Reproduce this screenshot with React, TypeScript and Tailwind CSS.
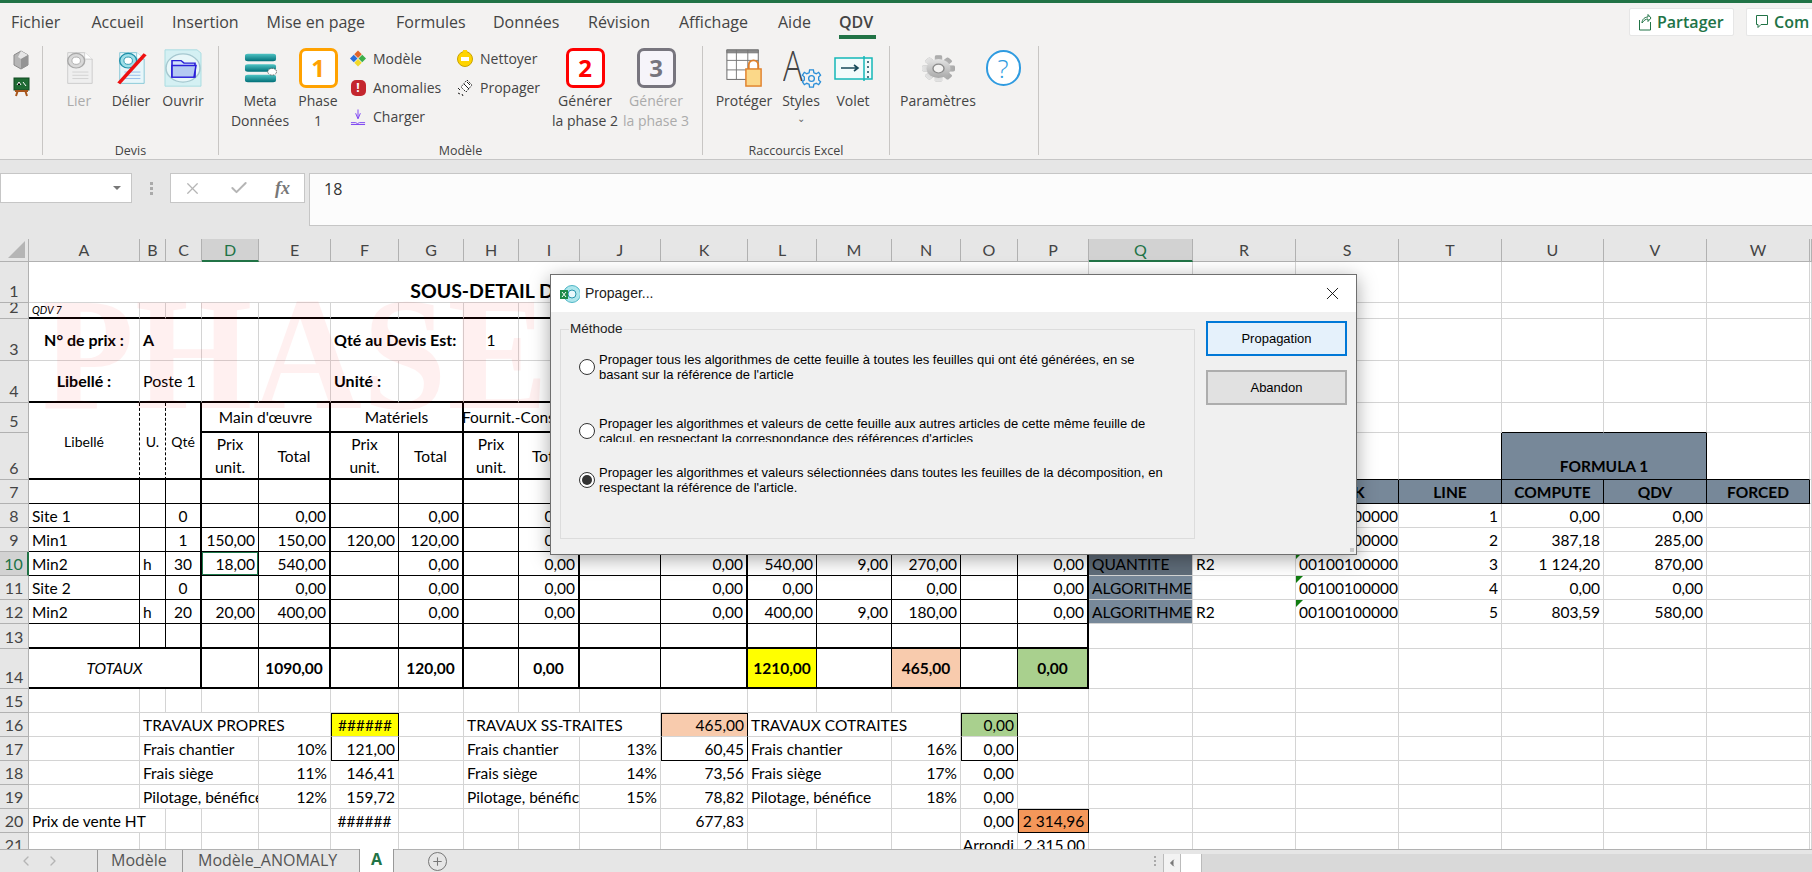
import clsx from 'clsx';
import { ChevronLeft, ChevronRight, Check, X, Plus } from 'lucide-react';

const COLS = ['#', 'A', 'B', 'C', 'D', 'E', 'F', 'G', 'H', 'I', 'J', 'K', 'L', 'M', 'N', 'O', 'P', 'Q', 'R', 'S', 'T', 'U', 'V', 'W', 'X'];
const SHEET_COLS = COLS.slice(1);

const TABS = [
  { label: 'Fichier', w: 'w-[80.5px]' },
  { label: 'Accueil', w: 'w-[80.5px]' },
  { label: 'Insertion', w: 'w-[94.5px]' },
  { label: 'Mise en page', w: 'w-[129.5px]' },
  { label: 'Formules', w: 'w-[97px]' },
  { label: 'Données', w: 'w-[95px]' },
  { label: 'Révision', w: 'w-[91px]' },
  { label: 'Affichage', w: 'w-[99px]' },
  { label: 'Aide', w: 'w-[61px]' },
];

type Cell = { t?: string; span?: string; n?: number; rs?: boolean; cls?: string; mark?: boolean };

const R = 'justify-end pr-[3px]';
const L = 'justify-start pl-[3px]';
const C = 'justify-center';
const BOLD = 'font-bold';
const BIG = '!text-[16px]';
const GREY = 'bg-[#778899]';
const HEAD = 'bg-[#778899] font-bold justify-center';
const YELLOW = 'bg-[#ffff00]';
const SALMON = 'bg-[#f8cbad]';
const GREEN = 'bg-[#a9d08e]';
const SMALL_HEAD = '!text-[14px] row-span-2 !items-start pt-[29px]';
const TWO_LINES = 'text-center !leading-[23px] whitespace-pre';

// black right borders of the price table, rows 5 to 14
const TABLE_RIGHT: Record<string, 'thin' | 'thick'> = {
  A: 'thin', B: 'thin', C: 'thick', D: 'thin', E: 'thick', F: 'thin', G: 'thick', H: 'thin',
  I: 'thick', J: 'thin', K: 'thick', L: 'thin', M: 'thin', N: 'thin', O: 'thin', P: 'thick',
};

const s2 = 'col-span-2';
const s3 = 'col-span-3';

const ROWS: Record<number, Record<string, Cell>> = {
  1: { A: { t: 'SOUS-DETAIL DE PRIX UNITAIRE', span: 'col-span-16', n: 16, cls: 'justify-center font-bold !text-[19.5px] !items-end pb-[1px]' } },
  2: { A: { t: 'QDV 7', cls: 'pl-[3px] italic !text-[10.5px]' } },
  3: {
    A: { t: 'N° de prix :', cls: `${C} ${BOLD} ${BIG}` },
    B: { t: 'A', span: s2, n: 2, cls: `${L} ${BOLD} ${BIG}` },
    F: { t: 'Qté au Devis Est:', span: s2, n: 2, cls: `${L} ${BOLD} ${BIG} whitespace-nowrap` },
    H: { t: '1', cls: C },
  },
  4: {
    A: { t: 'Libellé :', cls: `${C} ${BOLD} ${BIG}` },
    B: { t: 'Poste 1', span: s2, n: 2, cls: `${L} ${BIG}` },
    F: { t: 'Unité :', cls: `${L} ${BOLD} ${BIG}` },
  },
  5: {
    A: { t: 'Libellé', rs: true, cls: `${C} ${SMALL_HEAD}` },
    B: { t: 'U.', rs: true, cls: `${C} ${SMALL_HEAD}` },
    C: { t: 'Qté', rs: true, cls: `${C} ${SMALL_HEAD}` },
    D: { t: "Main d'œuvre", span: s2, n: 2, cls: C },
    F: { t: 'Matériels', span: s2, n: 2, cls: C },
    H: { t: 'Fournit.-Consom.', span: s2, n: 2, cls: `${C} whitespace-nowrap overflow-hidden` },
  },
  6: {
    D: { t: 'Prix\nunit.', cls: `${C} ${TWO_LINES}` },
    E: { t: 'Total', cls: C },
    F: { t: 'Prix\nunit.', cls: `${C} ${TWO_LINES}` },
    G: { t: 'Total', cls: C },
    H: { t: 'Prix\nunit.', cls: `${C} ${TWO_LINES}` },
    I: { t: 'Total', cls: C },
    U: { t: 'FORMULA 1', span: s2, n: 2, cls: `${HEAD} !items-end pb-[3px]` },
  },
  7: {
    Q: { cls: HEAD },
    R: { cls: HEAD },
    S: { t: 'LINK', cls: HEAD },
    T: { t: 'LINE', cls: HEAD },
    U: { t: 'COMPUTE', cls: HEAD },
    V: { t: 'QDV', cls: HEAD },
    W: { t: 'FORCED', cls: HEAD },
  },
  8: {
    A: { t: 'Site 1', cls: L }, C: { t: '0', cls: C }, E: { t: '0,00', cls: R }, G: { t: '0,00', cls: R }, I: { t: '0,00', cls: R },
    Q: { cls: GREY }, S: { t: '00100100000', mark: true, cls: L },
    T: { t: '1', cls: R }, U: { t: '0,00', cls: R }, V: { t: '0,00', cls: R },
  },
  9: {
    A: { t: 'Min1', cls: L }, C: { t: '1', cls: C }, D: { t: '150,00', cls: R }, E: { t: '150,00', cls: R }, F: { t: '120,00', cls: R }, G: { t: '120,00', cls: R }, I: { t: '0,00', cls: R },
    Q: { cls: GREY }, S: { t: '00100100000', mark: true, cls: L },
    T: { t: '2', cls: R }, U: { t: '387,18', cls: R }, V: { t: '285,00', cls: R },
  },
  10: {
    A: { t: 'Min2', cls: L }, B: { t: 'h', cls: L }, C: { t: '30', cls: C }, D: { t: '18,00', cls: `${R} ring-1 ring-inset ring-[#1f7a4d]` }, E: { t: '540,00', cls: R }, G: { t: '0,00', cls: R }, I: { t: '0,00', cls: R },
    K: { t: '0,00', cls: R }, L: { t: '540,00', cls: R }, M: { t: '9,00', cls: R }, N: { t: '270,00', cls: R }, P: { t: '0,00', cls: R },
    Q: { t: 'QUANTITE', cls: `${L} bg-[#5f6c79]` }, R: { t: 'R2', cls: L }, S: { t: '00100100000', mark: true, cls: L },
    T: { t: '3', cls: R }, U: { t: '1 124,20', cls: R }, V: { t: '870,00', cls: R },
  },
  11: {
    A: { t: 'Site 2', cls: L }, C: { t: '0', cls: C }, E: { t: '0,00', cls: R }, G: { t: '0,00', cls: R }, I: { t: '0,00', cls: R },
    K: { t: '0,00', cls: R }, L: { t: '0,00', cls: R }, N: { t: '0,00', cls: R }, P: { t: '0,00', cls: R },
    Q: { t: 'ALGORITHME', cls: `${L} ${GREY}` }, S: { t: '00100100000', mark: true, cls: L },
    T: { t: '4', cls: R }, U: { t: '0,00', cls: R }, V: { t: '0,00', cls: R },
  },
  12: {
    A: { t: 'Min2', cls: L }, B: { t: 'h', cls: L }, C: { t: '20', cls: C }, D: { t: '20,00', cls: R }, E: { t: '400,00', cls: R }, G: { t: '0,00', cls: R }, I: { t: '0,00', cls: R },
    K: { t: '0,00', cls: R }, L: { t: '400,00', cls: R }, M: { t: '9,00', cls: R }, N: { t: '180,00', cls: R }, P: { t: '0,00', cls: R },
    Q: { t: 'ALGORITHME', cls: `${L} ${GREY}` }, R: { t: 'R2', cls: L }, S: { t: '00100100000', mark: true, cls: L },
    T: { t: '5', cls: R }, U: { t: '803,59', cls: R }, V: { t: '580,00', cls: R },
  },
  14: {
    A: { t: 'TOTAUX', span: s3, n: 3, cls: `${C} italic` },
    E: { t: '1090,00', cls: `${C} ${BOLD}` },
    G: { t: '120,00', cls: `${C} ${BOLD}` },
    I: { t: '0,00', cls: `${C} ${BOLD}` },
    L: { t: '1210,00', cls: `${C} ${BOLD} ${YELLOW}` },
    N: { t: '465,00', cls: `${C} ${BOLD} ${SALMON}` },
    P: { t: '0,00', cls: `${C} ${BOLD} ${GREEN}` },
  },
  16: {
    B: { t: 'TRAVAUX PROPRES', span: 'col-span-4', n: 4, cls: L },
    F: { t: '######', cls: `${C} ${YELLOW} border-l border-t border-l-black border-t-black !border-r-black` },
    H: { t: 'TRAVAUX SS-TRAITES', span: s3, n: 3, cls: L },
    K: { t: '465,00', cls: `${R} ${SALMON} border-l border-t border-l-black border-t-black !border-r-black` },
    L: { t: 'TRAVAUX COTRAITES', span: s3, n: 3, cls: L },
    O: { t: '0,00', cls: `${R} ${GREEN} border-l border-t border-l-black border-t-black !border-r-black` },
  },
  17: {
    B: { t: 'Frais chantier', span: s3, n: 3, cls: L }, E: { t: '10%', cls: R },
    F: { t: '121,00', cls: `${R} border-l border-l-black !border-r-black !border-b-black` },
    H: { t: 'Frais chantier', span: s2, n: 2, cls: L }, J: { t: '13%', cls: R },
    K: { t: '60,45', cls: `${R} border-l border-l-black !border-r-black !border-b-black` },
    L: { t: 'Frais chantier', span: s2, n: 2, cls: L }, N: { t: '16%', cls: R },
    O: { t: '0,00', cls: `${R} border-l border-l-black !border-r-black !border-b-black` },
  },
  18: {
    B: { t: 'Frais siège', span: s3, n: 3, cls: L }, E: { t: '11%', cls: R }, F: { t: '146,41', cls: R },
    H: { t: 'Frais siège', span: s2, n: 2, cls: L }, J: { t: '14%', cls: R }, K: { t: '73,56', cls: R },
    L: { t: 'Frais siège', span: s2, n: 2, cls: L }, N: { t: '17%', cls: R }, O: { t: '0,00', cls: R },
  },
  19: {
    B: { t: 'Pilotage, bénéfice', span: s3, n: 3, cls: L }, E: { t: '12%', cls: R }, F: { t: '159,72', cls: R },
    H: { t: 'Pilotage, bénéfice', span: s2, n: 2, cls: L }, J: { t: '15%', cls: R }, K: { t: '78,82', cls: R },
    L: { t: 'Pilotage, bénéfice', span: s2, n: 2, cls: L }, N: { t: '18%', cls: R }, O: { t: '0,00', cls: R },
  },
  20: {
    A: { t: 'Prix de vente HT', span: s2, n: 2, cls: L },
    F: { t: '######', cls: C },
    K: { t: '677,83', cls: R },
    O: { t: '0,00', cls: R },
    P: { t: '2 314,96', cls: `${C} bg-[#f4975a] border-l border-t border-l-black border-t-black !border-r-black !border-b-black !border-r` },
  },
  21: {
    O: { t: 'Arrondi', cls: `${R} whitespace-nowrap` },
    P: { t: '2 315,00', cls: R },
  },
};

function rightClass(row: number, col: string) {
  const inTable = row >= 5 && row <= 14 && TABLE_RIGHT[col];
  if (inTable) {
    if (row <= 6 && (col === 'A' || col === 'B')) return 'border-r border-r-black [border-right-style:dashed]';
    return TABLE_RIGHT[col] === 'thick' ? 'border-r-2 border-r-black' : 'border-r border-r-black';
  }
  if (row === 6 && (col === 'V' || col === 'T')) return 'border-r border-r-black';
  if (row === 7 && ['Q', 'R', 'S', 'T', 'U', 'V', 'W'].includes(col)) return 'border-r border-r-black';
  return 'border-r border-r-[#d4d4d4]';
}

function bottomClass(row: number, col: string) {
  const inTable = TABLE_RIGHT[col];
  if (inTable) {
    if (row === 2 || row === 4 || row === 6 || row === 13 || row === 14) return 'border-b-2 border-b-black';
    if (row === 5 && !['A', 'B', 'C'].includes(col)) return 'border-b-2 border-b-black';
    if (row >= 7 && row <= 12) return 'border-b border-b-black';
  }
  if (row === 5 && (col === 'U' || col === 'V')) return 'border-b border-b-black';
  if (row === 6 && ['U', 'V', 'S', 'T', 'W', 'Q', 'R'].includes(col)) return 'border-b border-b-black';
  if (row === 7 && ['Q', 'R', 'S', 'T', 'U', 'V', 'W'].includes(col)) return 'border-b border-b-black';
  return 'border-b border-b-[#d4d4d4]';
}

function SheetRow({ row }: { row: number }) {
  const defs = ROWS[row] || {};
  const out = [];
  let skip = 0;
  const selected = row === 10;
  out.push(
    <div
      key="head"
      className={clsx(
        'flex items-end justify-center overflow-hidden border-b border-b-[#b1b1b1] pb-[1px] text-[16px] leading-[20px]',
        selected ? 'border-r-2 border-r-[#217346] bg-[#d2d2d2] text-[#217346]' : 'border-r border-r-[#b1b1b1] bg-[#e6e6e6] text-[#444]',
      )}
    >
      {row}
    </div>,
  );
  SHEET_COLS.forEach((col) => {
    if (skip > 0) {
      skip -= 1;
      return;
    }
    // cells covered by the Libellé / U. / Qté merges of row 5
    if (row === 6 && ['A', 'B', 'C'].includes(col)) return;
    const d = defs[col];
    if (d?.n) skip = d.n - 1;
    const bottomRow = d?.rs ? 6 : row;
    const lastCol = d?.n ? SHEET_COLS[SHEET_COLS.indexOf(col) + d.n - 1] : col;
    out.push(
      <div
        key={col}
        className={clsx(
          'relative flex min-w-0 items-center overflow-hidden whitespace-nowrap text-[15.5px] leading-[20px] text-black',
          rightClass(row, lastCol),
          bottomClass(bottomRow, col),
          d?.span,
          d?.cls,
        )}
      >
        {d?.mark && <span className="absolute left-0 top-0 h-0 w-0 border-r-[7px] border-t-[7px] border-r-transparent border-t-[#107c10]" />}
        {d?.t}
      </div>,
    );
  });
  return <>{out}</>;
}

function RibbonButton({ w, label, label2, disabled, icon, chevron }: { w: string; label: string; label2?: string; disabled?: boolean; icon: React.ReactNode; chevron?: boolean }) {
  return (
    <div className={clsx('flex shrink-0 flex-col items-center pt-[2px] text-[14px] leading-[20px]', w, disabled ? 'text-[#ababab]' : 'text-[#444]')}>
      <div className="flex h-[40px] items-center justify-center">{icon}</div>
      <div className="mt-[3px] whitespace-nowrap">{label}</div>
      {label2 && <div className="whitespace-nowrap">{label2}</div>}
      {chevron && <div className="text-[10px] leading-[14px] text-[#666]">⌄</div>}
    </div>
  );
}

function SmallButton({ icon, label }: { icon: React.ReactNode; label: string }) {
  return (
    <div className="flex h-[29px] items-center gap-[7px] whitespace-nowrap pl-[2px] text-[14px] text-[#444]">
      <span className="flex h-4 w-4 items-center justify-center">{icon}</span>
      {label}
    </div>
  );
}

function Group({ w, pad, label, children }: { w: string; pad: string; label?: string; children: React.ReactNode }) {
  return (
    <div className={clsx('flex h-[114px] shrink-0 flex-col', w)}>
      <div className={clsx('flex h-[96px]', pad)}>{children}</div>
      <div className="h-[18px] text-center text-[12.5px] leading-[18px] text-[#444]">{label}</div>
    </div>
  );
}

function Sep() {
  return <div className="h-[109px] w-px shrink-0 bg-[#c8c6c4]" />;
}

function NumberBadge({ n, tone }: { n: string; tone: string }) {
  return (
    <div className={clsx('flex h-[40px] w-[39px] items-center justify-center rounded-[7px] border-[3px] font-["Open_Sans",sans-serif] text-[24px] font-bold leading-none', tone)}>
      {n}
    </div>
  );
}

function DocIcon({ gray }: { gray?: boolean }) {
  const c1 = gray ? '#d9d9d9' : '#9fdfe8';
  const c2 = gray ? '#a8a8a8' : '#1f8fa8';
  return (
    <svg width="32" height="34" viewBox="0 0 34 42" preserveAspectRatio="none">
      <path d="M5 2h18l8 8v30H5z" fill={gray ? '#efefef' : '#e8f6fa'} stroke={gray ? '#c8c8c8' : '#7fc3d4'} />
      <path d="M23 2v8h8" fill="#fff" stroke={gray ? '#c8c8c8' : '#7fc3d4'} />
      <circle cx="14" cy="12" r="9" fill={c1} stroke={c2} strokeWidth="1.5" />
      <circle cx="14" cy="12" r="4.5" fill="#fff" stroke={c2} />
      <path d="M10 26h17M10 30h17M10 34h17" stroke={gray ? '#cfcfcf' : '#8fb8e8'} />
    </svg>
  );
}

function GearIcon() {
  return (
    <svg width="33" height="31" viewBox="0 0 36 42" preserveAspectRatio="none">
      <defs>
        <linearGradient id="gear" x1="0" y1="0" x2="0" y2="1">
          <stop offset="0" stopColor="#e4e4e4" />
          <stop offset="1" stopColor="#a9a9a9" />
        </linearGradient>
      </defs>
      {[0, 45, 90, 135, 180, 225, 270, 315].map((a) => (
        <rect key={a} x="14" y="3" width="8" height="36" rx="2" fill="url(#gear)" transform={`rotate(${a} 18 21)`} />
      ))}
      <circle cx="18" cy="21" r="13" fill="url(#gear)" />
      <circle cx="18" cy="21" r="6" fill="#f3f2f1" stroke="#8a8a8a" strokeWidth="1.5" />
    </svg>
  );
}

function DialogRadio({ checked, lines, clip }: { checked?: boolean; lines: string[]; clip?: boolean }) {
  return (
    <div className="flex items-center">
      <span className="flex h-[16px] w-[16px] shrink-0 items-center justify-center rounded-full border border-[#333] bg-white">
        {checked && <span className="h-[10px] w-[10px] rounded-full bg-[#333]" />}
      </span>
      <div className={clsx('ml-[4px] text-[13px] leading-[15px] text-black', clip && 'h-[23px] overflow-hidden')}>
        <div className={clip ? '-mt-[3px]' : ''}>
          {lines.map((l) => (
            <div key={l} className="whitespace-nowrap">{l}</div>
          ))}
        </div>
      </div>
    </div>
  );
}

export default function App() {
  const rowNumbers = Array.from({ length: 21 }, (_, i) => i + 1);
  return (
    <div className="h-[872px] w-[1812px] overflow-hidden bg-white font-['Open_Sans',sans-serif]">
      <div className="h-[3px] bg-[#217346]" />

      <div className="bg-[#f3f2f1]">
        <div className="flex h-[39px] overflow-hidden">
          <div className="flex flex-1 pl-[11px] text-[16px] text-[#444]">
            {TABS.map((tab) => (
              <div key={tab.label} className={clsx('pt-[8px] leading-[22px]', tab.w)}>{tab.label}</div>
            ))}
            <div className="h-[36px] w-[37px] border-b-[4px] border-b-[#217346] pt-[8px] font-semibold leading-[22px]">QDV</div>
          </div>
          <div className="mt-[5px] flex h-[28px] shrink-0 gap-[12px]">
            <div className="flex w-[105px] items-center gap-[5px] rounded-[2px] border border-[#e6e6e6] bg-white pl-[8px] text-[16px] font-semibold text-[#217346]">
              <svg width="14" height="18" viewBox="0 0 14 18" fill="none" stroke="#217346">
                <path d="M1.5 7v10h11V9M4 10c0-4 3-6 6-6V1.5L13 5l-3 3.5V6c-2 0-4 1-6 4z" />
              </svg>
              Partager
            </div>
            <div className="flex w-[66px] items-center gap-[5px] overflow-hidden whitespace-nowrap rounded-l-[2px] border border-r-0 border-[#e6e6e6] bg-white pl-[8px] text-[16px] font-semibold text-[#217346]">
              <svg width="14" height="16" viewBox="0 0 14 16" fill="none" stroke="#217346" className="shrink-0">
                <path d="M1.5 1.5h11v9H6l-3 3v-3H1.5z" />
              </svg>
              Com
            </div>
          </div>
        </div>

        <div className="flex h-[118px] border-b border-b-[#c6c6c6] pt-[4px]">
          <div className="flex w-[42px] shrink-0 flex-col items-center pt-[3px]">
            <svg width="16" height="20" viewBox="0 0 16 20" className="mt-[1px]">
              <path d="M8 1l7 4v10l-7 4-7-4V5z" fill="#b5b5b5" stroke="#8a8a8a" />
              <path d="M8 1l7 4-7 4-3-2z" fill="#e6e6e6" />
              <path d="M8 9v10l7-4V5z" fill="#949494" />
            </svg>
            <svg width="17" height="20" viewBox="0 0 17 20" className="mt-[7px]">
              <rect x="1" y="1" width="15" height="12" fill="#1f6b34" stroke="#124a22" />
              <path d="M4 8l2-3 2 3M10 5l3 4" stroke="#fff" />
              <path d="M3 19l2-6M14 19l-2-6M2 14h13" stroke="#a8561c" strokeWidth="2" />
            </svg>
          </div>
          <Sep />

          <Group w="w-[175px]" pad="pl-[10px]" label="Devis">
            <RibbonButton w="w-[52px]" label="Lier" disabled icon={<DocIcon gray />} />
            <RibbonButton
              w="w-[52px]"
              label="Délier"
              icon={
                <div className="relative">
                  <DocIcon />
                  <svg width="32" height="34" viewBox="0 0 34 42" preserveAspectRatio="none" className="absolute left-0 top-0">
                    <path d="M4 40L32 4" stroke="#ee1111" strokeWidth="4" />
                  </svg>
                </div>
              }
            />
            <RibbonButton
              w="w-[52px]"
              label="Ouvrir"
              icon={
                <svg width="38" height="38" viewBox="0 0 38 46" preserveAspectRatio="none">
                  <path d="M1 1h32l4 4v40H1z" fill="#d4f0f3" stroke="#a6dbe0" />
                  <circle cx="19" cy="23" r="17" fill="#e8f7f9" stroke="#a6c8d0" strokeWidth="1.5" />
                  <path d="M8 14h9l3 3h11v17H8z" fill="#cfe0fa" stroke="#2a1fd8" strokeWidth="1.6" />
                  <path d="M8 20h24l-2 14H8z" fill="#b4c9f2" stroke="#2a1fd8" strokeWidth="1.6" />
                </svg>
              }
            />
          </Group>
          <Sep />

          <Group w="w-[483px]" pad="pl-[9px]" label="Modèle">
            <RibbonButton
              w="w-[64px]"
              label="Meta"
              label2="Données"
              icon={
                <svg width="33" height="30" viewBox="0 0 34 40" preserveAspectRatio="none">
                  <defs>
                    <linearGradient id="teal" x1="0" y1="0" x2="0" y2="1">
                      <stop offset="0" stopColor="#4fc4c4" />
                      <stop offset="1" stopColor="#006f78" />
                    </linearGradient>
                  </defs>
                  <rect x="1" y="1" width="32" height="10" rx="3" fill="url(#teal)" />
                  <rect x="1" y="15" width="32" height="10" rx="3" fill="url(#teal)" />
                  <rect x="1" y="29" width="32" height="10" rx="3" fill="url(#teal)" />
                  <circle cx="29" cy="25" r="4.5" fill="#fff" stroke="#444" strokeDasharray="1.5 1" />
                </svg>
              }
            />
            <RibbonButton w="w-[52px]" label="Phase" label2="1" icon={<NumberBadge n="1" tone="border-[#ffa200] bg-white text-[#ffa200]" />} />
            <div className="ml-[4px] flex w-[107px] shrink-0 flex-col -mt-[2px]">
              <SmallButton
                label="Modèle"
                icon={
                  <svg width="17" height="17" viewBox="0 0 17 17">
                    <path d="M8.5 0l4 4-4 4-4-4z" fill="#e0662a" />
                    <path d="M4 4.5l4 4-4 4-4-4z" fill="#2a6ed8" />
                    <path d="M13 4.5l4 4-4 4-4-4z" fill="#3cae4a" />
                    <path d="M8.5 9l4 4-4 4-4-4z" fill="#f2d92a" />
                  </svg>
                }
              />
              <SmallButton
                label="Anomalies"
                icon={
                  <div className="flex h-[16px] w-[15px] items-center justify-center rounded-[5px] bg-[#c4262e] text-[12px] font-bold leading-none text-white">!</div>
                }
              />
              <SmallButton
                label="Charger"
                icon={
                  <svg width="17" height="18" viewBox="0 0 17 18" fill="none" stroke="#7a3ff2">
                    <path d="M8.5 1v9M6 5l2.5 6L11 5M1 15h5l2 1 2-1h6M1 17h15" />
                  </svg>
                }
              />
            </div>
            <div className="flex w-[92px] shrink-0 flex-col -mt-[2px]">
              <SmallButton
                label="Nettoyer"
                icon={
                  <svg width="16" height="17" viewBox="0 0 16 17">
                    <circle cx="8" cy="9" r="7.5" fill="#ffd400" stroke="#c9a300" />
                    <rect x="4" y="7" width="8" height="4" fill="#fff" />
                    <rect x="6" y="0" width="4" height="3" fill="#ffd400" />
                  </svg>
                }
              />
              <SmallButton
                label="Propager"
                icon={
                  <svg width="16" height="18" viewBox="0 0 16 18">
                    <path d="M10 1l5 5-6 7-5-5z" fill="#fff" stroke="#222" strokeDasharray="1.5 1" />
                    <path d="M7 5l5 5M10 3l3 3" stroke="#222" />
                    <path d="M1 9l2 2M1 14l2 1M5 15l1 2" stroke="#222" />
                  </svg>
                }
              />
            </div>
            <RibbonButton w="w-[76px]" label="Générer" label2="la phase 2" icon={<NumberBadge n="2" tone="border-[#ff0000] bg-white text-[#ff0000]" />} />
            <RibbonButton w="w-[66px]" label="Générer" label2="la phase 3" disabled icon={<NumberBadge n="3" tone="border-[#77757e] bg-[#f6f4fa] text-[#77757e]" />} />
          </Group>
          <Sep />

          <Group w="w-[186px]" pad="pl-[10px]" label="Raccourcis Excel">
            <RibbonButton
              w="w-[62px]"
              label="Protéger"
              icon={
                <svg width="38" height="38" viewBox="0 0 38 40">
                  <rect x="1" y="1" width="33" height="31" fill="#fff" stroke="#666" />
                  <path d="M1 1h33v3H1zM1 12h33M1 22h33M11 1v31M23 1v31" fill="#8a8a8a" stroke="#777" />
                  <path d="M24 22v-5a5 5 0 0 1 10 0v5" fill="none" stroke="#e0802a" strokeWidth="2" />
                  <rect x="21" y="21" width="16" height="18" fill="#fbd889" stroke="#e0802a" strokeWidth="1.5" />
                </svg>
              }
            />
            <RibbonButton
              w="w-[52px]"
              label="Styles"
              chevron
              icon={
                <div className="relative h-[40px] w-[40px]">
                  <span className="absolute -top-[6px] left-[2px] origin-top-left scale-x-[0.78] text-[42px] font-light leading-[46px] text-[#444]">A</span>
                  <svg width="21" height="21" viewBox="0 0 22 22" fill="none" stroke="#2b8fd8" strokeWidth="1.4" className="absolute bottom-[-1px] right-[-1px]">
                    <circle cx="11" cy="11" r="3" />
                    <path d="M9 2h4l.5 3 2.500 1 2.500-1.500 2 3-2 2v3l2 2-2 3-2.500-1.500-2.500 1-.5 3H9l-.5-3-2.500-1L3.500 17.500l-2-3 2-2v-3l-2-2 2-3L6 6l2.500-1z" />
                  </svg>
                </div>
              }
            />
            <RibbonButton
              w="w-[52px]"
              label="Volet"
              icon={
                <svg width="39" height="25" viewBox="0 0 39 25">
                  <rect x="1" y="2" width="37" height="21" fill="#f2fbfb" stroke="#14b8b8" strokeWidth="1.5" />
                  <path d="M30 0v25" stroke="#14b8b8" strokeWidth="1.5" />
                  <path d="M7 12h17M20 9l4 3-4 3" stroke="#174a5a" strokeWidth="1.6" fill="none" />
                  <path d="M34 5v2M34 10v2M34 15v2M34 20v2" stroke="#174a5a" strokeWidth="1.5" />
                </svg>
              }
            />
          </Group>
          <Sep />

          <Group w="w-[148px]" pad="pl-[10px]">
            <RibbonButton w="w-[76px]" label="Paramètres" icon={<GearIcon />} />
            <RibbonButton
              w="w-[54px]"
              label=""
              icon={
                <div className="flex h-[36px] w-[35px] items-center justify-center rounded-full border-2 border-[#2f9be0] bg-white text-[26px] font-light leading-none text-[#2f9be0]">?</div>
              }
            />
          </Group>
          <Sep />
        </div>
      </div>

      <div className="flex h-[79px] items-start bg-[#e6e6e6] pt-[13px]">
        <div className="flex h-[30px] w-[132px] shrink-0 items-center justify-end border border-[#c6c6c6] bg-white pr-[10px]">
          <span className="h-0 w-0 border-x-[4px] border-t-[4px] border-x-transparent border-t-[#777]" />
        </div>
        <div className="flex h-[30px] w-[38px] shrink-0 flex-col items-center justify-center gap-[2px]">
          <span className="h-[3px] w-[3px] bg-[#aaa]" />
          <span className="h-[3px] w-[3px] bg-[#aaa]" />
          <span className="h-[3px] w-[3px] bg-[#aaa]" />
        </div>
        <div className="flex h-[30px] w-[135px] shrink-0 items-center justify-between border border-[#c6c6c6] bg-white pl-[12px] pr-[14px] text-[#b5b5b5]">
          <X size={19} strokeWidth={1.6} />
          <Check size={20} strokeWidth={2.4} />
          <span className="font-['Liberation_Serif',serif] text-[18px] font-bold italic text-[#777]">fx</span>
        </div>
        <div className="ml-[4px] h-[53px] flex-1 border-y border-l border-[#c6c6c6] bg-[#fcfcfc] pl-[14px] pt-[4px] text-[16px] leading-[22px] text-[#333]">18</div>
      </div>

      <div className="relative h-[610px] overflow-hidden font-['Lato',sans-serif]">
        <div className="grid grid-cols-[29px_111px_26px_36px_57px_72px_68px_65px_55px_61px_81px_87px_69px_75px_69px_57px_71px_104px_103px_103px_103px_102px_103px_103px_1fr] grid-rows-[23px_41px_16px_42px_42px_30px_47px_24px_24px_24px_24px_24px_24px_25px_40px_24px_24px_24px_24px_24px_24px_24px]">
          {COLS.map((col) => {
            const selected = col === 'D' || col === 'Q';
            if (col === '#') {
              return (
                <div key={col} className="flex items-end justify-end border-b border-r border-[#b1b1b1] bg-[#e6e6e6] p-[3px]">
                  <span className="h-0 w-0 border-b-[17px] border-l-[17px] border-b-[#b5b5b5] border-l-transparent" />
                </div>
              );
            }
            return (
              <div
                key={col}
                className={clsx(
                  'flex items-center justify-center border-r border-r-[#b1b1b1] text-[16px] leading-[20px]',
                  selected ? 'border-b-2 border-b-[#217346] bg-[#d2d2d2] text-[#217346]' : 'border-b border-b-[#b1b1b1] bg-[#e6e6e6] text-[#444]',
                )}
              >
                {col !== 'X' && col}
              </div>
            );
          })}
          {rowNumbers.map((row) => (
            <SheetRow key={row} row={row} />
          ))}
        </div>
        <div className="pointer-events-none absolute left-[42px] top-[55px] origin-top-left scale-x-[0.93] whitespace-nowrap font-['Liberation_Serif',serif] text-[162px] font-bold leading-[120px] tracking-[1px] text-[#ff0000]/[0.06]">
          PHASE 1
        </div>
      </div>

      <div className="flex h-[23px] border-t border-t-[#b1b1b1] bg-[#e6e6e6] text-[16px] leading-[21px] text-[#555]">
        <div className="flex w-[98px] shrink-0 items-center gap-[11px] border-r border-r-[#999] pl-[18px] text-[#b5b5b5]">
          <ChevronLeft size={16} />
          <ChevronRight size={16} />
        </div>
        <div className="w-[85px] shrink-0 border-r border-r-[#999] pl-[13px]">Modèle</div>
        <div className="w-[176px] shrink-0 pl-[15px]">Modèle_ANOMALY</div>
        <div className="-mt-px flex w-[35px] shrink-0 justify-center border-x border-x-[#999] bg-white font-bold text-[#217346]">A</div>
        <div className="ml-[34px] flex w-[20px] shrink-0 items-center">
          <span className="flex h-[19px] w-[19px] items-center justify-center rounded-full border border-[#777] text-[#777]">
            <Plus size={13} />
          </span>
        </div>
        <div className="ml-[698px] flex w-[17px] shrink-0 flex-col items-center justify-center gap-[2px]">
          <span className="h-[2px] w-[2px] bg-[#aaa]" />
          <span className="h-[2px] w-[2px] bg-[#aaa]" />
          <span className="h-[2px] w-[2px] bg-[#aaa]" />
        </div>
        <div className="mt-[4px] flex flex-1 bg-[#d9d9d9]">
          <div className="flex w-[18px] items-center justify-center border-x border-x-[#bbb] bg-[#f3f3f3] text-[#777]">
            <ChevronLeft size={12} fill="#777" />
          </div>
          <div className="w-[21px] border-r border-r-[#bbb] bg-white" />
        </div>
      </div>

      <div className="absolute left-[550px] top-[274px] flex h-[281px] w-[807px] flex-col border border-[#6f6f6f] bg-[#f0f0f0] font-['Liberation_Sans',sans-serif] shadow-[0_4px_18px_rgba(0,0,0,0.35)]">
        <div className="flex h-[37px] shrink-0 items-center bg-white pl-[9px] pr-[13px]">
          <svg width="20" height="20" viewBox="0 0 20 20" className="shrink-0">
            <circle cx="12" cy="10" r="8.500" fill="#aee6ec" stroke="#4fb6c6" />
            <circle cx="12" cy="10" r="4" fill="#e8f8fb" stroke="#2a96ad" />
            <rect x="0" y="6" width="8" height="9" fill="#1e8a48" />
            <path d="M2 8l4 5M6 8l-4 5" stroke="#fff" />
          </svg>
          <span className="ml-[5px] flex-1 text-[14px] text-[#222]">Propager...</span>
          <X size={21} strokeWidth={1} className="text-black" />
        </div>
        <div className="relative flex flex-1 pl-[9px] pr-[8px] pt-[9px]">
          <div className="relative mt-[8px] h-[210px] w-[635px] shrink-0 border border-[#dcdcdc]">
            <span className="absolute -top-[9px] left-[8px] bg-[#f0f0f0] px-[1px] text-[13.5px] leading-[16px] text-[#222]">Méthode</span>
            <div className="flex flex-col pl-[18px] pt-[22px]">
              <DialogRadio lines={['Propager tous les algorithmes de cette feuille à toutes les feuilles qui ont été générées, en se', "basant sur la référence de l'article"]} />
              <div className="mt-[37px]">
                <DialogRadio clip lines={['Propager les algorithmes et valeurs de cette feuille aux autres articles de cette même feuille de', "calcul, en respectant la correspondance des références d'articles"]} />
              </div>
              <div className="mt-[23px]">
                <DialogRadio checked lines={['Propager les algorithmes et valeurs sélectionnées dans toutes les feuilles de la décomposition, en', "respectant la référence de l'article."]} />
              </div>
            </div>
          </div>
          <div className="ml-[11px] flex w-[141px] shrink-0 flex-col gap-[14px] text-[13px] text-black">
            <div className="flex h-[35px] items-center justify-center border-2 border-[#0078d7] bg-[#e5f1fb]">Propagation</div>
            <div className="flex h-[35px] items-center justify-center border-2 border-[#adadad] bg-[#e1e1e1]">Abandon</div>
          </div>
          <span className="absolute bottom-[2px] right-[2px] h-[4px] w-[4px] bg-[#c8c8c8]" />
        </div>
      </div>
    </div>
  );
}
